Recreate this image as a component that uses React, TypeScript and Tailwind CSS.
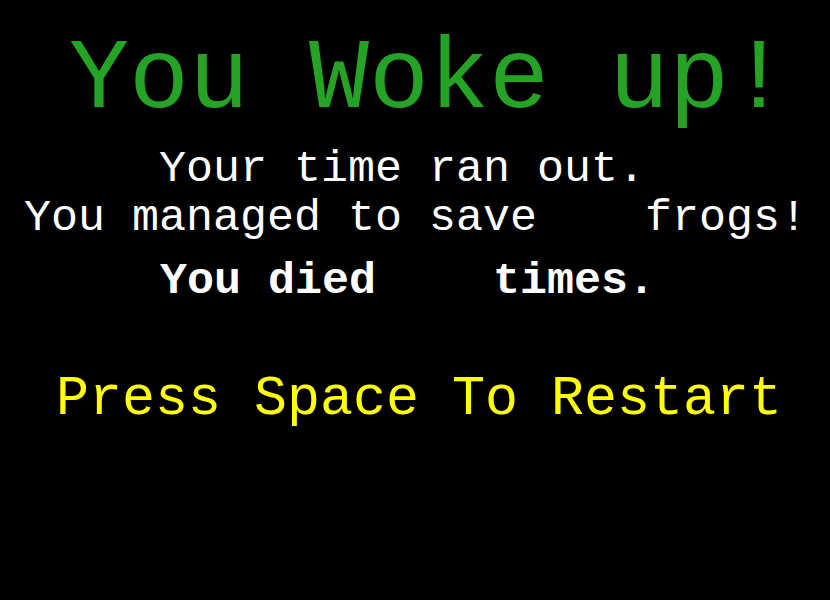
import React from "react";

export default function App() {
  return (
    <div
      className="w-[830px] h-[600px] bg-black overflow-hidden flex flex-col whitespace-pre"
      style={{ fontFamily: '"Liberation Mono", monospace' }}
    >
      <div className="mt-[36px] pl-[69px] h-[90px] text-[100px] leading-[90px] text-[#24a324]">You Woke up!</div>
      <div className="mt-[19px] pl-[159px] h-[50px] text-[45px] leading-[50px] text-white">Your time ran out.</div>
      <div className="mt-[-1px] pl-[24px] h-[50px] text-[45px] leading-[50px] text-white">You managed to save    frogs!</div>
      <div className="mt-[13px] pl-[160px] h-[50px] text-[45px] leading-[50px] font-bold text-white flex">
        <span>You died</span>
        <span className="ml-[117px]">times.</span>
      </div>
      <div className="mt-[63px] pl-[56px] h-[60px] text-[55px] leading-[60px] text-[#ffff00]">Press Space To Restart</div>
    </div>
  );
}
